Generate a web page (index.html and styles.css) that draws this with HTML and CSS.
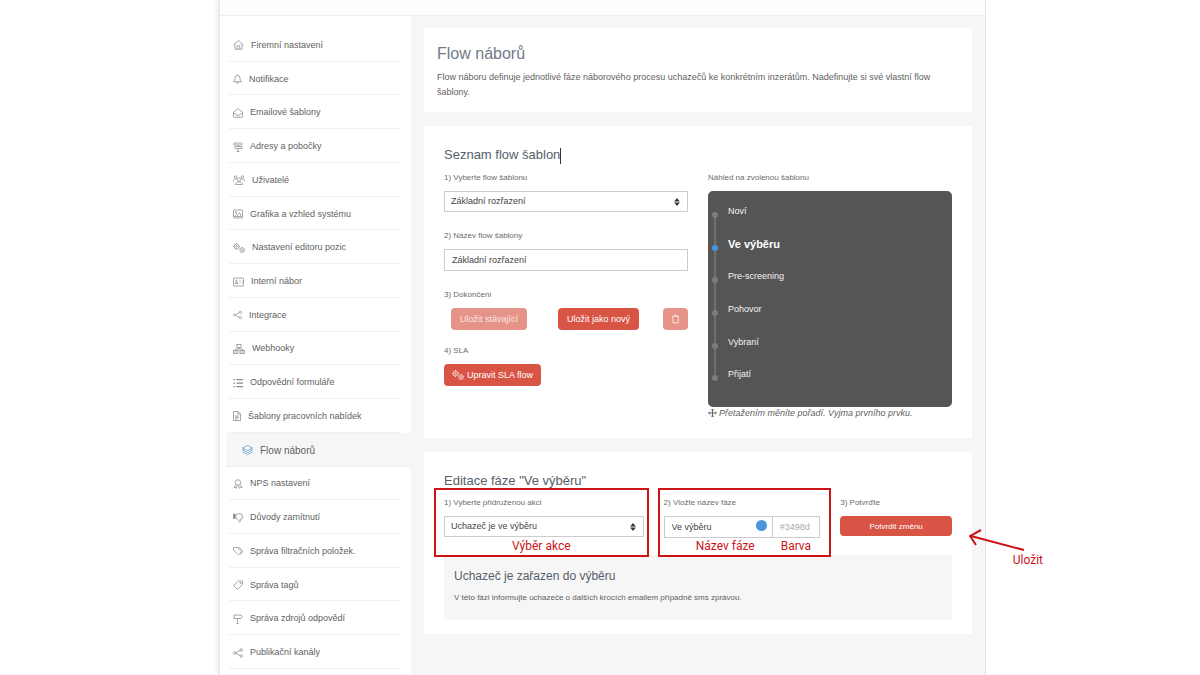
FILE: index.html
```html
<!DOCTYPE html>
<html lang="cs">
<head>
<meta charset="utf-8">
<title>Flow náborů</title>
<link rel="stylesheet" href="styles.css">
</head>
<body>
<svg class="sprite" aria-hidden="true">
  <symbol id="home" viewBox="0 0 22 20"><path d="M1 10 11 1l10 9M4 8v10.500h14V8M8.500 18v-6.500h5V18"/></symbol>
  <symbol id="bell" viewBox="0 0 18 20"><path d="M1 15.500c2.500-2 3-4 3-7.500a5 5 0 0 1 10 0c0 3.500.500 5.500 3 7.500zM7 16c.500 3.500 3.500 3.500 4 0M9 3V1"/></symbol>
  <symbol id="mail" viewBox="0 0 20 20"><path d="M1 8 10 1.500 19 8v9.500a1 1 0 0 1-1 1H2a1 1 0 0 1-1-1zM1 9.500l7 5q2 1.200 4 0l7-5"/></symbol>
  <symbol id="signs" viewBox="0 0 20 20"><path d="M2 2h15l2 2-2 2H2zM18 9H4L2 11l2 2h14zM10 6v3M10 13v6M7 19h6"/></symbol>
  <symbol id="users" viewBox="0 0 24 20"><circle cx="12" cy="9" r="3.500"/><circle cx="5" cy="4" r="2.500"/><circle cx="19" cy="4" r="2.500"/><path d="M5 19c0-7 14-7 14 0zM1 13c0-4 2-6 6-5M23 13c0-4-2-6-6-5"/></symbol>
  <symbol id="image" viewBox="0 0 20 20"><rect x="1" y="2" width="18" height="16" rx="1"/><circle cx="6" cy="7" r="1.500"/><path d="M3 15 7 11l2 2 4-6 4 8z"/></symbol>
  <symbol id="cogs" viewBox="0 0 24 20"><circle cx="7" cy="7" r="5"/><circle cx="7" cy="7" r="1.500"/><path d="M7 0v2M7 12v2M0 7h2M12 7h2"/><circle cx="18" cy="14" r="4.500"/><circle cx="18" cy="14" r="1"/><path d="M18 8v1.500M18 18.500V20M22.500 14H24"/></symbol>
  <symbol id="card" viewBox="0 0 22 20"><rect x="1" y="2" width="20" height="16" rx="1.500"/><circle cx="7" cy="8" r="1.500"/><path d="M4 13c0-3 6-3 6 0zM13 8h2M17 8h2M13 12h2M17 12h2"/></symbol>
  <symbol id="share" viewBox="0 0 20 20"><circle cx="3.500" cy="10" r="2.500"/><circle cx="16.500" cy="4" r="2.500"/><circle cx="16.500" cy="16" r="2.500"/><path d="m6 9 8-4M6 11l8 4"/></symbol>
  <symbol id="tree" viewBox="0 0 24 20"><rect x="8" y="1" width="8" height="6"/><rect x="1" y="13" width="9" height="6"/><rect x="14" y="13" width="9" height="6"/><path d="M12 7v3M5 13v-3h14v3M3 16h5M16 16h5"/></symbol>
  <symbol id="list" viewBox="0 0 20 20"><path d="M1 3h3M1 10h3M1 17h3M7 3h13M7 10h13M7 17h13" stroke-width="2.500"/></symbol>
  <symbol id="doc" viewBox="0 0 16 20"><path d="M1 1h9l5 5v13H1zM10 1v5h5M4 10h8M4 13h8M4 16h5"/></symbol>
  <symbol id="layers" viewBox="0 0 22 20"><path d="m11 1 10 5-10 5L1 6zM1 10l10 5 10-5M1 14l10 5 10-5M4 8l-3 2M18 8l3 2"/></symbol>
  <symbol id="award" viewBox="0 0 20 20"><circle cx="10" cy="7" r="5.500"/><path d="m6 11-4 6 3-.500L6.500 19 9 13M14 11l4 6-3-.500-1.500 2.500-2.500-6"/></symbol>
  <symbol id="thumb" viewBox="0 0 20 20"><path d="M1 2h3v9H1z" fill="currentColor"/><path d="M6 3c4-2 8-2 11-1 1 2 2 5 2 8 0 2-1 2-5 2 1 3 1 6-1 6-2-2-2-5-7-7z"/></symbol>
  <symbol id="tags" viewBox="0 0 20 20"><path d="M1 8V4q0-1 1-1h7l7 7q1 1 0 2l-4 5q-1 1-2 0zM11 3h2l6 6q1 2 0 3l-4 5"/></symbol>
  <symbol id="tag" viewBox="0 0 20 20"><path d="M11 2h7q1 0 1 1v6l-9 9q-1 1-2 0l-6-6q-1-1 0-2z"/><circle cx="15" cy="6" r="1.200"/></symbol>
  <symbol id="sign" viewBox="0 0 20 20"><path d="M2 2h14l3 3.500L16 9H2zM9 9v10M7 19h4"/></symbol>
  <symbol id="trash" viewBox="0 0 20 20"><path d="M2 4h16M7 4V1.500h6V4M4 4v14.500h12V4" stroke-width="2"/></symbol>
  <symbol id="move" viewBox="0 0 20 20"><path d="M10 2v16M2 10h16M7 4l3-3 3 3M7 16l3 3 3-3M4 7l-3 3 3 3M16 7l3 3-3 3" stroke-width="2.200"/></symbol>
  <symbol id="updown" viewBox="0 0 10 14"><path d="m5 0 5 6H0zM5 14l5-6H0z" fill="currentColor" stroke="none"/></symbol>
</svg>

<div class="window">
  <header class="topbar"></header>
  <div class="layout">
    <nav class="sidebar" aria-label="Nastavení">
      <a class="item" href="#"><svg class="icon w11"><use href="#home"/></svg>Firemní nastavení</a>
      <a class="item" href="#"><svg class="icon w9"><use href="#bell"/></svg>Notifikace</a>
      <a class="item" href="#"><svg class="icon"><use href="#mail"/></svg>Emailové šablony</a>
      <a class="item" href="#"><svg class="icon"><use href="#signs"/></svg>Adresy a pobočky</a>
      <a class="item" href="#"><svg class="icon w12"><use href="#users"/></svg>Uživatelé</a>
      <a class="item" href="#"><svg class="icon"><use href="#image"/></svg>Grafika a vzhled systému</a>
      <a class="item" href="#"><svg class="icon w12"><use href="#cogs"/></svg>Nastavení editoru pozic</a>
      <a class="item" href="#"><svg class="icon w11"><use href="#card"/></svg>Interní nábor</a>
      <a class="item" href="#"><svg class="icon w9"><use href="#share"/></svg>Integrace</a>
      <a class="item" href="#"><svg class="icon w12"><use href="#tree"/></svg>Webhooky</a>
      <a class="item" href="#"><svg class="icon"><use href="#list"/></svg>Odpovědní formuláře</a>
      <a class="item" href="#"><svg class="icon w8"><use href="#doc"/></svg>Šablony pracovních nabídek</a>
      <a class="item active" href="#" aria-current="page"><svg class="icon w11"><use href="#layers"/></svg>Flow náborů</a>
      <a class="item" href="#"><svg class="icon"><use href="#award"/></svg>NPS nastavení</a>
      <a class="item" href="#"><svg class="icon"><use href="#thumb"/></svg>Důvody zamítnutí</a>
      <a class="item" href="#"><svg class="icon"><use href="#tags"/></svg>Správa filtračních položek.</a>
      <a class="item" href="#"><svg class="icon"><use href="#tag"/></svg>Správa tagů</a>
      <a class="item" href="#"><svg class="icon"><use href="#sign"/></svg>Správa zdrojů odpovědí</a>
      <a class="item" href="#"><svg class="icon"><use href="#share"/></svg>Publikační kanály</a>
    </nav>

    <main class="content">
      <section class="card intro">
        <h1>Flow náborů</h1>
        <p>Flow náboru definuje jednotlivé fáze náborového procesu uchazečů ke konkrétním inzerátům. Nadefinujte si své vlastní flow šablony.</p>
      </section>

      <section class="card templates">
        <h2>Seznam flow šablon<span class="caret"></span></h2>
        <div class="columns">
          <form class="stack">
            <div class="field">
              <label for="template">1) Vyberte flow šablonu</label>
              <div class="select"><select id="template"><option>Základní rozřazení</option></select><svg class="arrows"><use href="#updown"/></svg></div>
            </div>
            <div class="field">
              <label for="name">2) Název flow šablony</label>
              <input id="name" class="text" type="text" value="Základní rozřazení">
            </div>
            <div class="field actions-field">
              <span class="label">3) Dokončení</span>
              <div class="actions">
                <button class="btn first" type="button" disabled>Uložit stávající</button>
                <button class="btn" type="button">Uložit jako nový</button>
                <button class="btn square" type="button" disabled aria-label="Smazat"><svg class="icon w9"><use href="#trash"/></svg></button>
              </div>
            </div>
            <div class="field">
              <span class="label">4) SLA</span>
              <button class="btn sla" type="button"><svg class="icon w12"><use href="#cogs"/></svg>Upravit SLA flow</button>
            </div>
          </form>
          <div class="preview">
            <span class="label">Náhled na zvolenou šablonu</span>
            <ol class="phases">
              <li>Noví</li>
              <li class="current">Ve výběru</li>
              <li>Pre-screening</li>
              <li>Pohovor</li>
              <li>Vybraní</li>
              <li>Přijatí</li>
            </ol>
            <p class="hint"><svg class="icon w9"><use href="#move"/></svg>Přetažením měníte pořadí. Vyjma prvního prvku.</p>
          </div>
        </div>
      </section>

      <section class="card">
        <h2>Editace fáze "Ve výběru"</h2>
        <form class="edit">
          <div class="field marked">
            <label for="action">1) Vyberte přidruženou akci</label>
            <div class="select"><select id="action"><option>Uchazeč je ve výběru</option></select><svg class="arrows"><use href="#updown"/></svg></div>
            <div class="mark"><span>Výběr akce</span></div>
          </div>
          <div class="field marked">
            <label for="phase">2) Vložte název fáze</label>
            <div class="group">
              <input id="phase" class="text" type="text" value="Ve výběru">
              <button class="dot" type="button" aria-label="Vybrat barvu"></button>
              <input class="text hex" type="text" value="#3498d" aria-label="Barva">
            </div>
            <div class="mark pair"><span>Název fáze</span><span>Barva</span></div>
          </div>
          <div class="field marked">
            <span class="label">3) Potvrďte</span>
            <button class="btn confirm" type="button">Potvrdit změnu</button>
            <div class="pointer">
              <svg viewBox="0 0 58 24"><path d="M55 21 2 7M12 1 1 7l6 9"/></svg>
              <span>Uložit</span>
            </div>
          </div>
        </form>
        <div class="note">
          <h3>Uchazeč je zařazen do výběru</h3>
          <p>V této fázi informujte uchazeče o dalších krocích emailem případně sms zprávou.</p>
        </div>
      </section>
    </main>
  </div>
</div>
</body>
</html>
```
FILE: styles.css
```css
* { box-sizing: border-box; }

body {
  margin: 0;
  background: #fff;
  color: #5f5f5f;
  font: 9px/15px "Liberation Sans", Arial, sans-serif;
}

h1, h2, h3, p, ol { margin: 0; padding: 0; font-weight: 400; }
button, input, select { font: inherit; color: inherit; margin: 0; }

.sprite { position: absolute; width: 0; height: 0; }

.icon {
  width: 10px;
  height: 10px;
  flex: none;
  fill: none;
  stroke: currentColor;
  stroke-width: 1.5;
}
.w8 { width: 8px; }
.w9 { width: 9px; }
.w11 { width: 11px; }
.w12 { width: 12px; }

.window {
  display: flex;
  flex-direction: column;
  min-height: 100vh;
  margin: 0 214px 0 219px;
  border: solid #e4e4e4;
  border-width: 0 1px;
  box-shadow: -3px 0 4px #eee;
}
.topbar {
  height: 16px;
  background: #fdfdfd;
  border-bottom: 1px solid #efefef;
}
.layout { display: flex; flex: 1; }

.sidebar {
  display: flex;
  flex-direction: column;
  flex: none;
  width: 191px;
  padding: 12px 10px 6px 9px;
  background: #fff;
}
.item {
  display: flex;
  flex: 1;
  align-items: center;
  gap: 7px;
  padding: 2px 0 0 4px;
  border-bottom: 1px solid #f0f0f0;
  color: #5f5f5f;
  text-decoration: none;
  white-space: nowrap;
}
.item .icon { color: #8a8a8a; }
.item.active {
  margin: 0 -10px 0 -3px;
  padding-left: 16px;
  background: #f6f6f6;
  font-size: 10px;
}
.item.active .icon { color: #5b9bd5; }

.content {
  display: flex;
  flex: 1;
  flex-direction: column;
  gap: 14px;
  min-width: 0;
  padding: 12px 13px 14px;
  background: #f6f6f6;
}
.card { padding: 20px 20px 14px; background: #fff; }
.intro { padding: 16px 13px 12px; }
.templates { padding-bottom: 19px; }

h1 {
  margin-bottom: 6px;
  color: #727a88;
  font-size: 16px;
  line-height: 20px;
}
h2 { color: #555e6a; font-size: 13px; line-height: 18px; }
h3 { color: #555e6a; font-size: 12px; line-height: 16px; }

.caret {
  display: inline-block;
  width: 1px;
  height: 16px;
  background: #333;
  vertical-align: middle;
}

.columns {
  display: grid;
  grid-template-columns: 1fr 1fr;
  gap: 20px;
  padding-top: 6px;
}
.stack { display: flex; flex-direction: column; gap: 16px; }
.actions-field { margin-bottom: -3px; }
.field, .preview { display: flex; flex-direction: column; }
label, .label {
  padding-bottom: 5px;
  color: #6c6c6c;
  font-size: 8px;
  line-height: 16px;
}

.select { position: relative; display: grid; }
select, .text {
  width: 100%;
  min-width: 0;
  height: 22px;
  padding: 0 7px;
  border: 1px solid #ccc;
  border-radius: 0;
  background: #fff;
  color: #444;
  outline: 0;
}
select { appearance: none; height: 21px; padding: 0 6px; }
.arrows {
  position: absolute;
  top: 7px;
  right: 8px;
  width: 6px;
  height: 8px;
  color: #333;
}

.btn {
  display: flex;
  align-items: center;
  justify-content: center;
  gap: 3px;
  height: 22px;
  padding: 0 9px;
  border: 0;
  border-radius: 4px;
  background: #d85445;
  color: #fff;
}
.btn:disabled { background: #e69489; color: #fbe4e1; }
.actions { display: flex; gap: 24px; padding-left: 7px; }
.first { margin-right: auto; }
.square { padding: 0 8px; }
.sla { align-self: flex-start; padding: 0 8px; }

.phases {
  display: flex;
  flex-direction: column;
  min-height: 216px;
  padding: 4px 7px 16px 20px;
  border-radius: 5px;
  background: #555;
  color: #f4f4f4;
  list-style: none;
}
.phases li {
  position: relative;
  display: flex;
  flex: 1;
  align-items: center;
}
.phases li::before {
  content: "";
  position: absolute;
  left: -16px;
  top: 17px;
  z-index: 1;
  width: 6px;
  height: 6px;
  border-radius: 50%;
  background: #7d7d7d;
}
.phases li:not(:last-child)::after {
  content: "";
  position: absolute;
  left: -14px;
  top: 20px;
  width: 2px;
  height: 100%;
  background: #6f6f6f;
}
.phases .current { color: #fff; font-size: 11px; font-weight: 700; }
.phases .current::before { background: #4a94dc; }
.hint { display: flex; align-items: center; gap: 2px; line-height: 12px; font-style: italic; }

.edit {
  display: grid;
  grid-template-columns: 200fr 157fr 112fr;
  gap: 20px;
  padding-top: 5px;
}
.marked { position: relative; }
.group { display: grid; grid-template-columns: 110fr 48fr; position: relative; }
.hex { border-left: 0; color: #aaa; }
.dot {
  position: absolute;
  top: 4px;
  right: 53px;
  width: 11px;
  height: 11px;
  padding: 0;
  border: 0;
  border-radius: 50%;
  background: #4a94dc;
}
.confirm { height: 20px; font-size: 8px; }

.mark {
  position: absolute;
  inset: -7px -5px -19px -10px;
  display: flex;
  align-items: flex-end;
  justify-content: center;
  border: 2px solid #cc1417;
  color: #cc1417;
  font: 12px/17px Roboto, sans-serif;
  pointer-events: none;
}
.pair { right: -11px; left: -6px; gap: 26px; padding-left: 18px; }

.pointer {
  position: absolute;
  top: 34px;
  left: 100%;
  display: flex;
  flex-direction: column;
  align-items: flex-end;
  width: 91px;
  color: #cc1417;
  font: 12px/14px Roboto, sans-serif;
}
.pointer svg {
  width: 58px;
  height: 24px;
  margin-right: 16px;
  fill: none;
  stroke: #cc1417;
  stroke-width: 2;
}

.note { margin-top: 17px; padding: 13px 10px 15px; background: #f6f6f6; }
.note p { padding-top: 6px; font-size: 8px; }
```
